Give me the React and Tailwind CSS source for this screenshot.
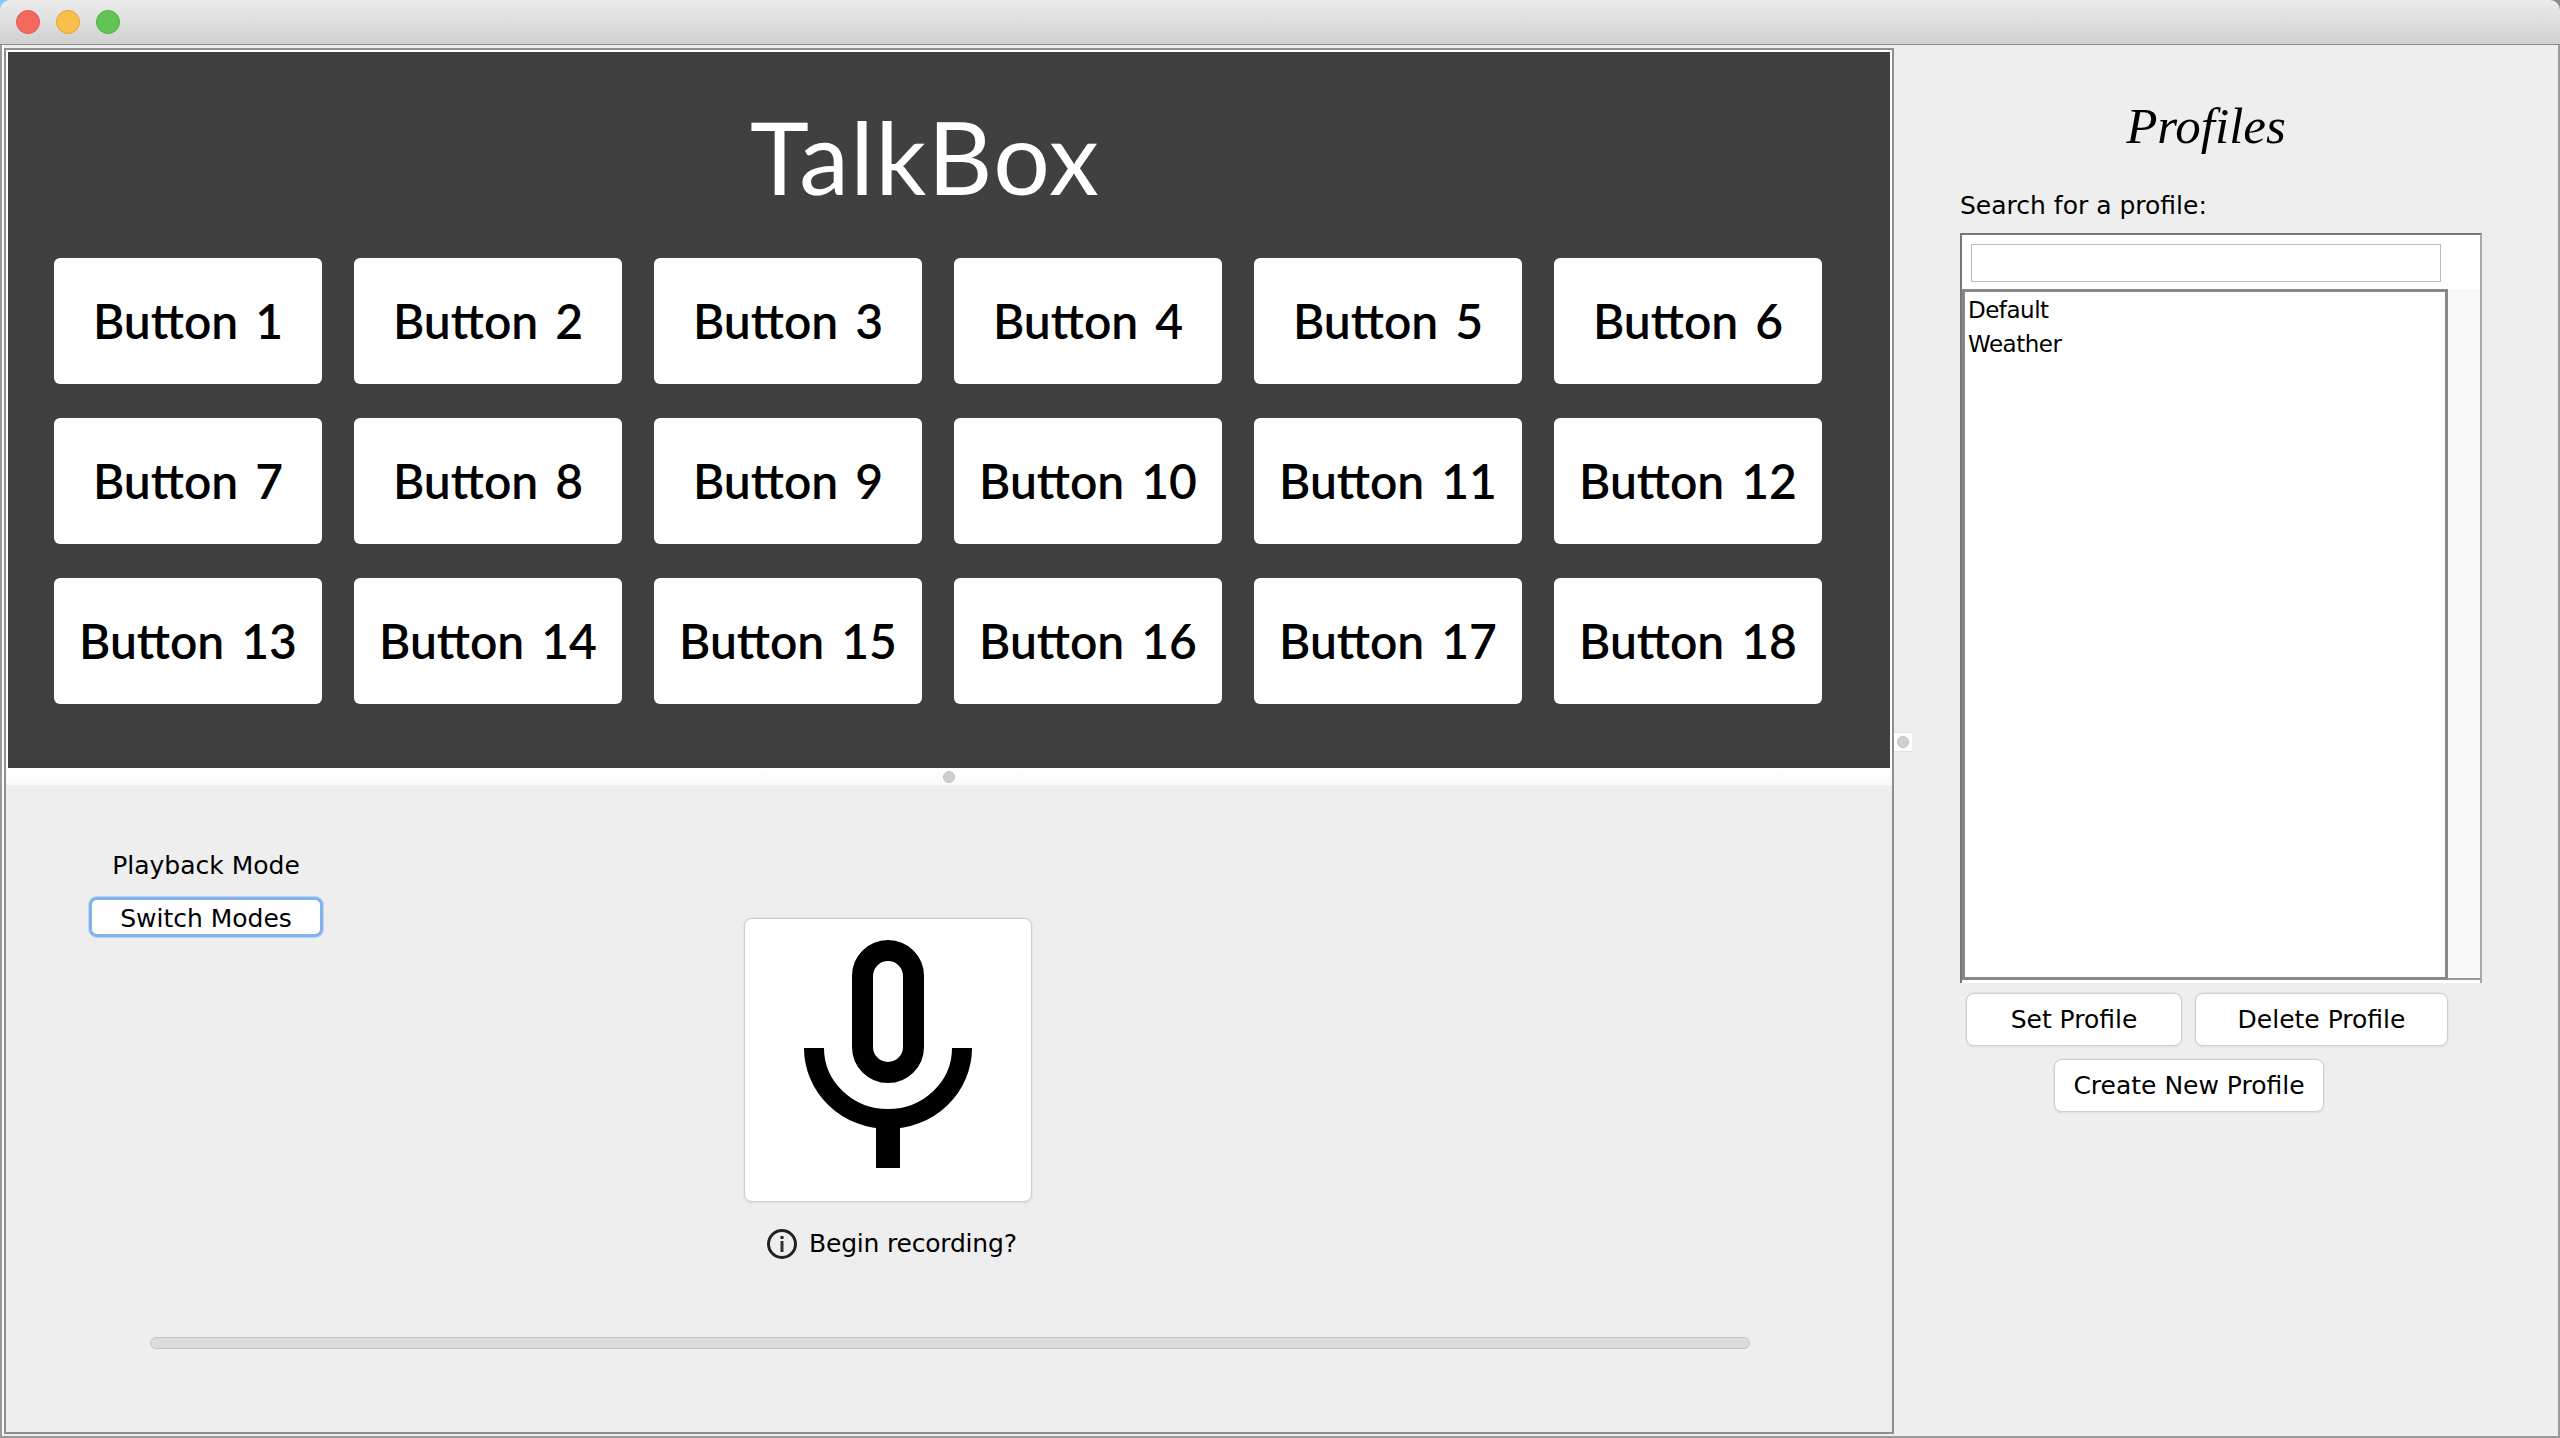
const uiFont = "font-['DejaVu_Sans',sans-serif] text-[25px] text-black";
const listFont = "font-['DejaVu_Sans',sans-serif] text-[23px] tracking-[-0.5px] text-black";

const soundButtons = Array.from({ length: 18 }, (_, i) => `Button ${i + 1}`);

const AquaButton = ({ label, className }) => (
    <button
        className={`flex items-center justify-center rounded-[8px] border border-[#cfcfcf] bg-white shadow-[0_0_0_1px_#e4e4e4,0_1px_1px_#b5b5b5] ${uiFont} ${className}`}
    >
        {label}
    </button>
);

const MicIcon = () => (
    <svg width="168" height="228" viewBox="0 0 168 228" fill="none" stroke="black">
        <rect x="58.5" y="10.5" width="51" height="122" rx="25.5" strokeWidth="21" />
        <path d="M10 108 A74 71 0 0 0 158 108" strokeWidth="20" />
        <rect x="72" y="172" width="24" height="56" fill="black" stroke="none" />
    </svg>
);

const InfoIcon = () => (
    <svg width="30" height="30" viewBox="0 0 30 30" fill="none">
        <circle cx="15" cy="15" r="13.5" stroke="#222" strokeWidth="3" />
        <rect x="13.5" y="7" width="3" height="3" fill="#222" />
        <rect x="13.5" y="12" width="3" height="11" fill="#333" />
    </svg>
);

const TalkBoxPane = () => (
    <div className="h-[718px] border-2 border-b-0 border-white bg-[#404040]">
        <h1 className="h-[206px] pl-[742px] pt-[49px] font-['Lato',sans-serif] text-[100px] leading-[110px] tracking-[1.5px] text-white">
            TalkBox
        </h1>
        <div className="ml-[46px] grid w-[1768px] grid-cols-6 gap-x-[32px] gap-y-[34px]">
            {soundButtons.map((label) => (
                <button
                    key={label}
                    className="h-[126px] rounded-[6px] bg-white font-['Lato',sans-serif] text-[48px] font-semibold [word-spacing:5px] text-black"
                >
                    {label}
                </button>
            ))}
        </div>
    </div>
);

const RecorderPane = () => (
    <div className="relative flex-1">
        <div className="flex h-[17px] items-center bg-gradient-to-b from-white to-[#fafafa] pl-[937px]">
            <div className="size-[12px] rounded-full border border-[#c0c0c0] bg-[#cfcfcf]" />
        </div>
        <div className="flex h-[552px] pl-[83px]">
            <div className="flex w-[234px] flex-col items-center pt-[62px]">
                <span className={`h-[50px] whitespace-nowrap ${uiFont}`}>Playback Mode</span>
                <button className={`h-[40px] w-[234px] rounded-[8px] border-[3px] border-[#82b3ec] bg-white pb-[2px] shadow-[0_0_0_1px_#bcd5f3] ${uiFont}`}>
                    Switch Modes
                </button>
            </div>
            <div className="ml-[421px] flex flex-col pt-[133px]">
                <div className="flex h-[284px] w-[288px] items-start justify-center rounded-[8px] border border-[#cccccc] bg-white pt-[21px] shadow-[0_0_0_1px_#e4e4e4,0_1px_1px_#b0b0b0]">
                    <MicIcon />
                </div>
                <div className={`mt-[23px] ml-[23px] flex items-center gap-[12px] whitespace-nowrap tracking-[-0.2px] ${uiFont}`}>
                    <InfoIcon />
                    Begin recording?
                </div>
            </div>
        </div>
        <div className="ml-[144px] h-[12px] w-[1600px] rounded-full border border-[#c4c4c4] bg-[#dcdcdc]" />
    </div>
);

const ProfilesPane = () => (
    <div className="relative flex-1 pl-[66px]">
        <h2 className="w-[492px] pt-[51px] text-center font-['Liberation_Serif',serif] text-[51px] leading-[60px] italic text-black">
            Profiles
        </h2>
        <p className={`mt-[35px] h-[30px] leading-[30px] ${uiFont}`}>Search for a profile:</p>
        <div className="mt-[12px] h-[750px] w-[522px] border-2 border-b-0 border-t-[#777] border-l-[#777] border-r-[#a8a8a8] bg-white">
            <input className="ml-[9px] mt-[9px] block h-[38px] w-[470px] border border-[#bbb] bg-white" />
            <div className="mt-[7px] flex h-[691px]">
                <div className="w-[486px] border-[3px] border-[#888] pl-[3px] pt-[1px]">
                    <div className={`h-[34px] leading-[34px] ${listFont}`}>Default</div>
                    <div className={`h-[34px] leading-[34px] ${listFont}`}>Weather</div>
                </div>
                <div className="w-[32px] border-b-2 border-[#999] bg-[#f8f8f8]" />
            </div>
        </div>
        <div className="ml-[6px] mt-[10px] flex gap-[13px]">
            <AquaButton label="Set Profile" className="h-[53px] w-[216px]" />
            <AquaButton label="Delete Profile" className="h-[53px] w-[253px]" />
        </div>
        <AquaButton label="Create New Profile" className="ml-[94px] mt-[13px] h-[53px] w-[270px]" />
    </div>
);

export default function App() {
    return (
        <div className="flex h-[1438px] w-[2560px] flex-col overflow-hidden bg-[#9a9a9a]">
            {/* wallpaper only shows through the rounded title bar corners */}
            <div className="bg-gradient-to-r from-[#8cc4ee] from-[1%] to-[#8f8a88] to-[1%]">
                <div className="flex h-[45px] items-center gap-[16px] rounded-t-[10px] border-b border-[#8a8a8a] bg-gradient-to-b from-[#ececec] to-[#d0d0d0] pb-[1px] pl-[16px]">
                    <div className="size-[24px] rounded-full border border-[#e2564e] bg-[#f4695f]" />
                    <div className="size-[24px] rounded-full border border-[#e0a63a] bg-[#f8bf4b]" />
                    <div className="size-[24px] rounded-full border border-[#4fae45] bg-[#61c554]" />
                </div>
            </div>
            <div className="mx-[2px] mb-[2px] flex flex-1 bg-[#eeeeee]">
                <div className="w-[2px] bg-white" />
                <div className="mt-[3px] mb-[2px] flex w-[1890px] flex-col border-2 border-[#8e8e8e]">
                    <TalkBoxPane />
                    <RecorderPane />
                </div>
                <div className="relative flex-1">
                    <div className="absolute left-0 top-[687px] flex h-[20px] w-[18px] items-center justify-center border-y border-[#e0e0e0] bg-white">
                        <div className="size-[12px] rounded-full border border-[#c0c0c0] bg-[#cfcfcf]" />
                    </div>
                    <ProfilesPane />
                </div>
            </div>
        </div>
    );
}
